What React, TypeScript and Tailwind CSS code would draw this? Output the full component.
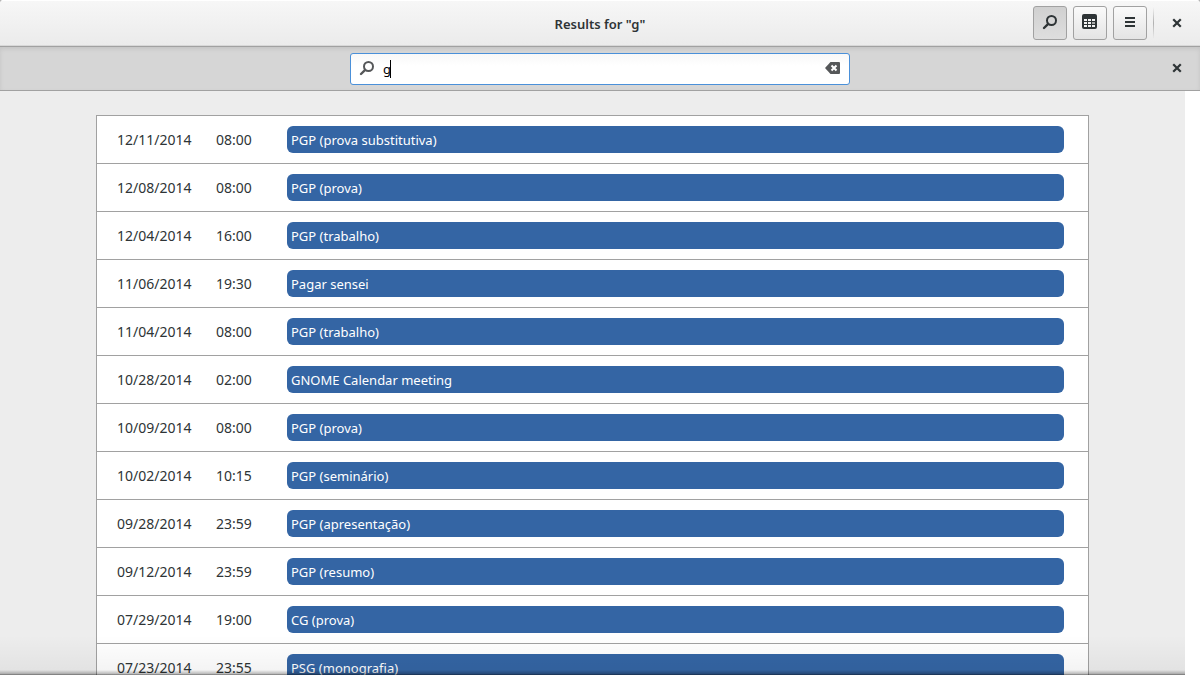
import { useState } from "react";

const events = [
  { date: "12/11/2014", time: "08:00", title: "PGP (prova substitutiva)" },
  { date: "12/08/2014", time: "08:00", title: "PGP (prova)" },
  { date: "12/04/2014", time: "16:00", title: "PGP (trabalho)" },
  { date: "11/06/2014", time: "19:30", title: "Pagar sensei" },
  { date: "11/04/2014", time: "08:00", title: "PGP (trabalho)" },
  { date: "10/28/2014", time: "02:00", title: "GNOME Calendar meeting" },
  { date: "10/09/2014", time: "08:00", title: "PGP (prova)" },
  { date: "10/02/2014", time: "10:15", title: "PGP (seminário)" },
  { date: "09/28/2014", time: "23:59", title: "PGP (apresentação)" },
  { date: "09/12/2014", time: "23:59", title: "PGP (resumo)" },
  { date: "07/29/2014", time: "19:00", title: "CG (prova)" },
  { date: "07/23/2014", time: "23:55", title: "PSG (monografia)" },
];

function SearchIcon() {
  return (
    <svg width="16" height="16" viewBox="0 0 16 16" fill="none" stroke="currentColor" aria-hidden="true">
      <circle cx="9.5" cy="6.5" r="4.5" strokeWidth="2" />
      <path d="M6.200 9.800 2 14" strokeWidth="2.4" strokeLinecap="round" />
    </svg>
  );
}

function CalendarIcon() {
  return (
    <svg width="16" height="16" viewBox="0 0 16 16" aria-hidden="true">
      <rect width="15" height="15" rx="2" fill="currentColor" />
      <path
        fill="#f4f4f4"
        d="M2 5h3v2H2zM6 5h3v2H6zM10 5h3v2h-3zM2 8h3v2H2zM6 8h3v2H6zM2 11h3v2H2zM6 11h3v2H6zM10 11h3v2h-3z"
      />
      <path fill="#a8aaaa" d="M10 8h3v2h-3z" />
    </svg>
  );
}

function MenuIcon() {
  return (
    <svg width="16" height="16" viewBox="0 0 16 16" fill="currentColor" aria-hidden="true">
      <path d="M3 3h10v2H3zM3 7h10v2H3zM3 11h10v2H3z" />
    </svg>
  );
}

function CloseIcon() {
  return (
    <svg width="16" height="16" viewBox="0 0 16 16" stroke="currentColor" aria-hidden="true">
      <path d="m5 5 6 6M11 5l-6 6" strokeWidth="2.2" strokeLinecap="square" />
    </svg>
  );
}

function ClearIcon() {
  return (
    <svg width="16" height="16" viewBox="0 0 16 16" aria-hidden="true">
      <path fill="currentColor" d="M5.500 2H14a1 1 0 0 1 1 1v10a1 1 0 0 1-1 1H5.500L0 8Z" />
      <path d="m6.500 5.500 5 5M11.500 5.500l-5 5" stroke="white" strokeWidth="2" />
    </svg>
  );
}

const headerButton =
  "flex size-[34px] items-center justify-center rounded-[3px] border border-[#a1a1a1] pb-0.5";

export default function App() {
  const [query, setQuery] = useState("g");

  return (
    <div className="h-screen bg-[#b5b5b5] font-['Noto_Sans','Open_Sans',sans-serif] text-[13px] text-[#2e3436]">
      <div className="flex h-full flex-col overflow-hidden rounded-t-[4px] bg-white">
        <header className="grid h-[47px] shrink-0 grid-cols-[1fr_auto_1fr] items-center border-b border-[#a1a1a1] bg-linear-to-b from-[#f7f7f7] to-[#ebebeb] shadow-[inset_0_1px_white,inset_0_-1px_#d8d8d8]">
          <h1 className="col-start-2 pt-1 font-semibold">Results for "{query}"</h1>
          <div className="flex items-center justify-end gap-1.5 pr-[15px]">
            <button aria-label="Search" aria-pressed="true" className={`${headerButton} bg-linear-to-b from-[#d0d0d0] to-[#dedede]`}>
              <SearchIcon />
            </button>
            <button aria-label="Calendar view" className={`${headerButton} bg-linear-to-b from-[#fafafa] to-[#e4e4e4]`}>
              <CalendarIcon />
            </button>
            <button aria-label="Menu" className={`${headerButton} bg-linear-to-b from-[#fafafa] to-[#e4e4e4]`}>
              <MenuIcon />
            </button>
            <div className="h-8 w-px bg-linear-to-b from-transparent via-[#b0b0b0] to-transparent" />
            <button aria-label="Close window" className="ml-[9px]">
              <CloseIcon />
            </button>
          </div>
        </header>

        <div className="grid h-11 shrink-0 grid-cols-[1fr_500px_1fr] items-center border-b border-[#a1a1a1] bg-[#d6d6d6] shadow-[inset_0_2px_4px_#c4c4c4]">
          <div className="relative col-start-2 flex h-8 items-center rounded-[3px] border border-[#4a90d9] bg-linear-to-b from-[#f8f8f8] to-white to-40% px-2 pb-0.5 text-[#555759]">
            <SearchIcon />
            <input
              aria-label="Search events"
              value={query}
              onChange={(e) => setQuery(e.target.value)}
              className="min-w-0 flex-1 px-2 pt-1 text-black outline-none"
            />
            <span className="absolute left-[39px] top-1.5 h-[18px] w-px bg-black" />
            <button aria-label="Clear search" onClick={() => setQuery("")}>
              <ClearIcon />
            </button>
          </div>
          <button aria-label="Close search" className="mr-[15px] justify-self-end pb-0.5">
            <CloseIcon />
          </button>
        </div>

        <main className="relative mr-[15px] min-h-0 flex-1 overflow-hidden bg-[#ededed] px-24 pt-6">
          <table className="w-full table-fixed border-separate border-spacing-0 border border-b-0 border-[#a1a1a1] bg-white">
            <colgroup>
              <col className="w-[119px]" />
              <col className="w-[71px]" />
              <col />
            </colgroup>
            <tbody>
              {events.map((event) => (
                <tr key={event.date} className="h-12">
                  <td className="border-b border-[#a1a1a1] pl-5 text-sm">{event.date}</td>
                  <td className="border-b border-[#a1a1a1] text-sm">{event.time}</td>
                  <td className="border-b border-[#a1a1a1] pr-6">
                    <div className="h-[27px] truncate rounded-md bg-[#3465a4] px-1 leading-[29px] text-white">{event.title}</div>
                  </td>
                </tr>
              ))}
            </tbody>
          </table>
          <div className="pointer-events-none absolute inset-x-0 bottom-0 h-10 bg-linear-to-b from-transparent to-black/5" />
          <div className="pointer-events-none absolute inset-x-0 bottom-0 h-[5px] border-b border-black/40 bg-linear-to-b from-transparent to-black/25" />
        </main>
      </div>
    </div>
  );
}
